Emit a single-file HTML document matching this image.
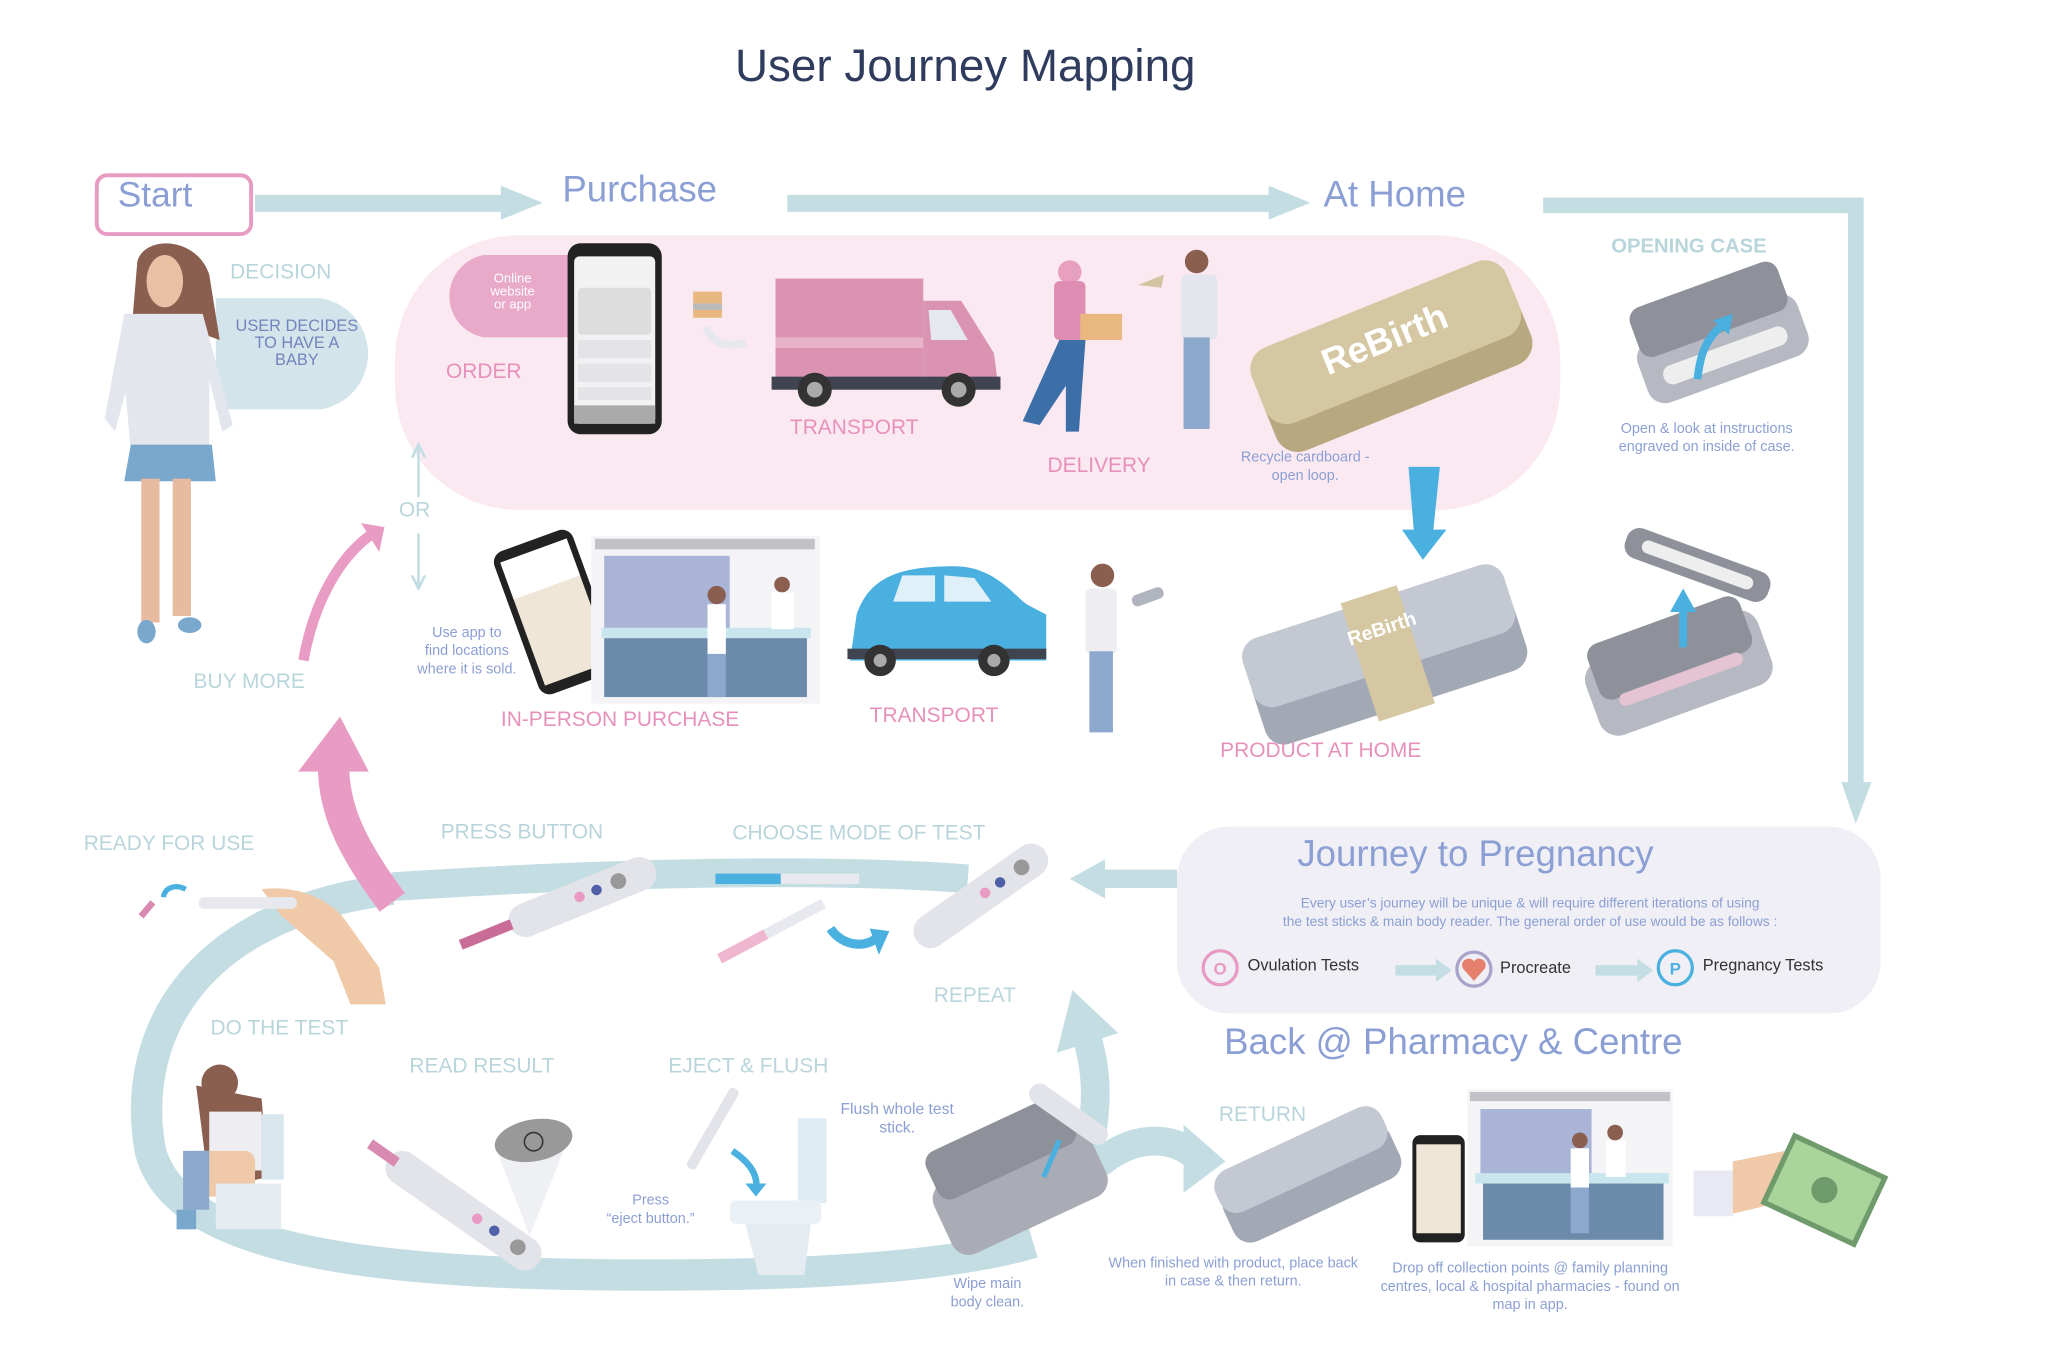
<!DOCTYPE html>
<html><head><meta charset="utf-8"><style>
html,body{margin:0;padding:0;background:#fff;width:2048px;height:1365px;overflow:hidden}
#s{position:absolute;left:0;top:0;width:1566px;height:1044px;transform:scale(1.3078);transform-origin:0 0;font-family:"Liberation Sans",sans-serif}
.t{position:absolute;white-space:nowrap;line-height:1}
.lb{color:#b9d5dc;font-size:16px}
.pk{color:#e690bb;font-size:16px}
.sm{color:#8b9fd4;font-size:11px;text-align:center;line-height:14px;white-space:nowrap;position:absolute}
.h{color:#8b9fd4;font-size:28px}
svg{position:absolute;left:0;top:0}
</style></head><body><div id="s">
<svg width="1566" height="1044" viewBox="0 0 1566 1044">
<rect x="302" y="180" width="891" height="210" rx="95" fill="#fbe9f1"/>
<rect x="900" y="632" width="538" height="143" rx="40" fill="#efeff5"/>
<g fill="#c3dde3">
<rect x="195" y="149" width="190" height="13"/><polygon points="383,142 415,155 383,168"/>
<rect x="602" y="149" width="370" height="13"/><polygon points="970,142 1002,155 970,168"/>
<rect x="1180" y="151" width="245" height="12"/><rect x="1413" y="151" width="12" height="450"/><polygon points="1408,598 1431,598 1419,630"/>
<polygon points="900,665 845,665 845,657 818,672 845,687 845,679 900,679"/>
<polygon points="1067,738 1098,738 1098,733 1110,742 1098,751 1098,746 1067,746"/>
<polygon points="1220,738 1252,738 1252,733 1264,742 1252,751 1252,746 1220,746"/>
</g>
<rect x="74" y="134" width="118" height="45" rx="8" fill="#fff" stroke="#e89cc4" stroke-width="3"/>
<path d="M300,678 C500,665 650,665 740,672" stroke="#c3dde3" stroke-width="22" fill="none"/>
<path d="M300,680 C140,700 100,800 115,880 C135,960 300,975 500,975 C650,975 740,965 790,950" stroke="#c3dde3" stroke-width="24" fill="none"/>
<path d="M830,890 C840,850 840,820 830,790" stroke="#c3dde3" stroke-width="22" fill="none"/>
<polygon points="808,805 820,757 855,790" fill="#c3dde3"/>
<path d="M840,890 C870,865 900,870 915,885" stroke="#c3dde3" stroke-width="22" fill="none"/>
<polygon points="905,860 937,888 905,912" fill="#c3dde3"/>
<path d="M232,505 C240,460 260,425 285,408" stroke="#e89cc4" stroke-width="8" fill="none"/>
<polygon points="276,400 294,403 290,422" fill="#e89cc4"/>
<path d="M300,690 C270,650 255,620 255,585" stroke="#e89cc4" stroke-width="24" fill="none"/>
<polygon points="228,590 260,548 282,590" fill="#e89cc4"/>
<g stroke="#c3dde3" stroke-width="2" fill="none"><line x1="320" y1="342" x2="320" y2="380"/><line x1="320" y1="408" x2="320" y2="448"/><polyline points="315,350 320,340 325,350"/><polyline points="315,440 320,450 325,440"/></g>
<path d="M165,228 H245 A43,43 0 0 1 245,313 H165 Z" fill="#d3e5eb"/>
<path d="M440,195 H370 A32,32 0 0 0 370,258 H440 Z" fill="#e9a9c9"/>
<path d="M105,200 C110,180 150,180 160,210 L168,260 L140,250 L100,260 Z" fill="#8a5f50"/>
<ellipse cx="126" cy="215" rx="14" ry="20" fill="#e8c0a3"/>
<path d="M95,240 L155,240 L178,325 L170,330 L160,290 L160,345 L100,345 L96,300 L88,330 L80,320 Z" fill="#e4e6ee"/>
<path d="M100,340 L162,340 L165,368 L95,368 Z" fill="#7aa8cc"/>
<rect x="108" y="366" width="14" height="110" fill="#e6bba0"/><rect x="132" y="366" width="14" height="105" fill="#e6bba0"/>
<ellipse cx="112" cy="483" rx="7" ry="9" fill="#7aa8cc"/><ellipse cx="145" cy="478" rx="9" ry="6" fill="#7aa8cc"/>
<rect x="434" y="186" width="72" height="146" rx="10" fill="#222"/>
<rect x="439" y="196" width="62" height="128" rx="4" fill="#f2f2f2"/>
<rect x="442" y="220" width="56" height="36" rx="3" fill="#ddd"/><rect x="442" y="260" width="56" height="14" fill="#e4e4e8"/><rect x="442" y="278" width="56" height="14" fill="#e4e4e8"/><rect x="442" y="296" width="56" height="10" fill="#e4e4e8"/>
<rect x="439" y="310" width="62" height="14" fill="#aaa"/>
<rect x="530" y="223" width="22" height="20" fill="#e8b880"/><rect x="530" y="232" width="22" height="5" fill="#bbb"/>
<path d="M540,250 C545,265 560,265 570,262" stroke="#e6e8ee" stroke-width="6" fill="none"/>
<rect x="593" y="213" width="113" height="80" fill="#db93b2"/>
<path d="M706,230 L735,230 L760,270 L763,293 L706,293 Z" fill="#db93b2"/>
<path d="M710,237 L727,237 L740,260 L712,260 Z" fill="#e6e8f0"/>
<rect x="593" y="258" width="113" height="8" fill="#e9b3ca"/>
<rect x="590" y="288" width="175" height="10" fill="#3f4450"/>
<circle cx="623" cy="298" r="13" fill="#333"/><circle cx="623" cy="298" r="6" fill="#aaa"/>
<circle cx="733" cy="298" r="13" fill="#333"/><circle cx="733" cy="298" r="6" fill="#aaa"/>
<circle cx="818" cy="208" r="9" fill="#e8a0bf"/><rect x="806" y="215" width="24" height="45" rx="4" fill="#e08db3"/>
<rect x="826" y="240" width="32" height="20" fill="#e8b880"/>
<path d="M810,260 L830,260 L825,330 L815,330 L815,295 L795,325 L782,322 Z" fill="#3c6ea8"/>
<path d="M870,218 L890,210 L888,220 Z" fill="#d3c3a0"/>
<circle cx="915" cy="200" r="9" fill="#8a5f50"/><rect x="903" y="210" width="28" height="50" rx="5" fill="#e4e6ee"/>
<rect x="905" y="258" width="20" height="70" fill="#8ca8cc"/>
<g transform="translate(1063,270) rotate(-22)"><rect x="-105" y="-25" width="210" height="70" rx="18" fill="#b8a880"/><rect x="-105" y="-40" width="210" height="62" rx="18" fill="#d6c7a3"/>
<text x="0" y="-2" text-anchor="middle" fill="#fff" font-size="28" font-weight="bold" font-family="Liberation Sans">ReBirth</text></g>
<g transform="translate(1315,260) rotate(-20)"><rect x="-65" y="-18" width="130" height="50" rx="14" fill="#b6b9c2"/><rect x="-60" y="-45" width="120" height="40" rx="10" fill="#8e919a"/><rect x="-50" y="5" width="100" height="15" rx="7" fill="#eee"/></g>
<path d="M1298,290 C1300,270 1305,258 1318,248" stroke="#4ab0e0" stroke-width="6" fill="none"/><polygon points="1310,245 1325,240 1322,256" fill="#4ab0e0"/>
<polygon points="1077,357 1101,357 1096,405 1106,405 1088,428 1072,405 1081,405" fill="#4ab0e0"/>
<g transform="translate(1058,498) rotate(-18)"><rect x="-105" y="-15" width="210" height="60" rx="15" fill="#a3a8b5"/><rect x="-105" y="-40" width="210" height="55" rx="15" fill="#c4c8d2"/><rect x="-20" y="-45" width="45" height="95" fill="#d6c7a3"/>
<text x="4" y="-12" text-anchor="middle" fill="#fff" font-size="15" font-weight="bold" font-family="Liberation Sans">ReBirth</text></g>
<g transform="translate(1298,432) rotate(20)"><rect x="-58" y="-12" width="116" height="24" rx="10" fill="#8e919a"/><rect x="-45" y="-5" width="90" height="10" rx="5" fill="#eee"/></g>
<g transform="translate(1282,510) rotate(-20)"><rect x="-70" y="-25" width="140" height="60" rx="15" fill="#b6b9c2"/><rect x="-62" y="-38" width="124" height="45" rx="10" fill="#8e919a"/><rect x="-50" y="5" width="100" height="10" rx="5" fill="#e4c3d3"/></g>
<rect x="1284" y="465" width="6" height="30" fill="#4ab0e0"/><polygon points="1277,468 1287,450 1297,468" fill="#4ab0e0"/>
<g transform="translate(425,468) rotate(-20)"><rect x="-32" y="-58" width="64" height="116" rx="9" fill="#222"/><rect x="-27" y="-50" width="54" height="100" fill="#efe6d8"/><rect x="-27" y="-50" width="54" height="30" fill="#fff"/></g>
<rect x="452" y="410" width="175" height="128" fill="#f4f4f6"/><rect x="455" y="412" width="168" height="8" fill="#c0c2c8"/>
<rect x="462" y="425" width="96" height="60" fill="#a9b4d6"/><rect x="462" y="485" width="155" height="48" fill="#6c8aaa"/><rect x="460" y="480" width="160" height="8" fill="#c9e6ef"/>
<circle cx="548" cy="455" r="7" fill="#8a5f50"/><rect x="541" y="462" width="14" height="40" fill="#fff"/><rect x="541" y="500" width="14" height="33" fill="#8ca8cc"/>
<circle cx="598" cy="447" r="6" fill="#8a5f50"/><rect x="590" y="453" width="17" height="28" fill="#fff"/>
<path d="M655,470 C665,440 690,433 730,433 C760,433 775,455 785,462 L800,470 L800,505 L650,505 Z" fill="#4ab0e0"/>
<path d="M683,460 L690,440 L715,440 L715,460 Z M722,460 L722,440 L745,442 L758,460 Z" fill="#dff0f8"/>
<rect x="648" y="496" width="152" height="8" fill="#3f4450"/>
<circle cx="673" cy="505" r="12" fill="#333"/><circle cx="673" cy="505" r="5" fill="#aaa"/><circle cx="760" cy="505" r="12" fill="#333"/><circle cx="760" cy="505" r="5" fill="#aaa"/>
<circle cx="843" cy="440" r="9" fill="#8a5f50"/><rect x="830" y="450" width="24" height="50" rx="4" fill="#eeeef2"/><rect x="833" y="498" width="18" height="62" fill="#8ca8cc"/>
<rect x="865" y="452" width="25" height="9" rx="4" fill="#b0b4be" transform="rotate(-20 877 456)"/>
<circle cx="933" cy="740" r="13" fill="none" stroke="#e99ac4" stroke-width="2.5"/><text x="933" y="745" text-anchor="middle" fill="#e99ac4" font-size="13" font-weight="bold" font-family="Liberation Sans">O</text>
<circle cx="1127" cy="741" r="13" fill="none" stroke="#a9a3cc" stroke-width="2.5"/><path d="M1127,750 L1119,741 A4.5,4.5 0 1 1 1127,735 A4.5,4.5 0 1 1 1135,741 Z" fill="#e5806c"/>
<circle cx="1281" cy="740" r="13" fill="none" stroke="#4ab0e0" stroke-width="2.5"/><text x="1281" y="745" text-anchor="middle" fill="#4ab0e0" font-size="13" font-weight="bold" font-family="Liberation Sans">P</text>
<path d="M200,680 C230,676 255,690 265,705 L290,740 L295,768 L268,768 L255,735 L215,700 Z" fill="#efc9a8"/>
<rect x="152" y="686" width="75" height="9" rx="4" fill="#e8e9ee"/>
<rect x="110" y="688" width="5" height="14" fill="#d98ab0" transform="rotate(40 112 695)"/>
<path d="M125,686 C126,678 135,676 142,680" stroke="#4ab0e0" stroke-width="4" fill="none"/>
<g transform="translate(445,685) rotate(-22)"><rect x="-60" y="-12" width="120" height="26" rx="13" fill="#e2e4ea"/><circle cx="30" cy="0" r="6" fill="#999"/><circle cx="12" cy="0" r="4" fill="#5060a8"/><circle cx="-2" cy="0" r="4" fill="#e99ac4"/><rect x="-100" y="-4" width="42" height="8" fill="#c96c97"/></g>
<rect x="547" y="668" width="110" height="8" fill="#e8e9ee"/><rect x="547" y="668" width="50" height="8" fill="#4ab0e0"/>
<g transform="translate(590,712) rotate(-28)"><rect x="-45" y="-4" width="90" height="8" fill="#e8e9ee"/><rect x="-45" y="-4" width="40" height="8" fill="#f0b5cf"/></g>
<path d="M635,710 C645,725 665,725 672,715" stroke="#4ab0e0" stroke-width="7" fill="none"/><polygon points="665,710 680,712 672,730" fill="#4ab0e0"/>
<g transform="translate(750,685) rotate(-35)"><rect x="-60" y="-13" width="120" height="26" rx="13" fill="#e2e4ea"/><circle cx="38" cy="0" r="6" fill="#999"/><circle cx="18" cy="0" r="4" fill="#5060a8"/><circle cx="4" cy="0" r="4" fill="#e99ac4"/></g>
<circle cx="168" cy="828" r="14" fill="#8a5f50"/><path d="M150,830 L200,840 L205,900 L160,910 Z" fill="#8a5f50"/>
<rect x="160" y="850" width="40" height="45" fill="#eeeef2"/><rect x="140" y="880" width="55" height="35" rx="8" fill="#efc9a8"/><rect x="140" y="880" width="20" height="45" fill="#8ca8cc"/>
<rect x="200" y="852" width="17" height="50" fill="#d8e6ee"/><rect x="165" y="905" width="50" height="35" fill="#e4ecf2"/><rect x="135" y="925" width="15" height="15" fill="#7aa8cc"/>
<g transform="translate(355,925) rotate(35)"><rect x="-70" y="-12" width="140" height="26" rx="13" fill="#e2e4ea"/><circle cx="50" cy="0" r="6" fill="#999"/><circle cx="28" cy="0" r="4" fill="#5060a8"/><circle cx="12" cy="0" r="4" fill="#e99ac4"/><rect x="-88" y="-4" width="25" height="8" fill="#d98ab0"/></g>
<polygon points="380,880 435,870 405,945" fill="#eef0f4"/>
<ellipse cx="408" cy="872" rx="30" ry="16" fill="#999" transform="rotate(-10 408 872)"/><circle cx="408" cy="873" r="7" fill="none" stroke="#333" stroke-width="1.2"/>
<g transform="translate(545,863) rotate(-60)"><rect x="-35" y="-4" width="70" height="8" rx="3" fill="#e2e4ea"/></g>
<path d="M560,880 C575,890 580,900 578,910" stroke="#4ab0e0" stroke-width="5" fill="none"/><polygon points="570,905 586,905 578,915" fill="#4ab0e0"/>
<rect x="610" y="855" width="22" height="65" fill="#e0ecf4"/><rect x="558" y="918" width="70" height="18" rx="5" fill="#eaf1f6"/><path d="M570,936 L620,936 L615,975 L580,975 Z" fill="#e4ecf2"/>
<g transform="translate(778,905) rotate(-25)"><rect x="-65" y="-25" width="130" height="60" rx="14" fill="#a9acb4"/><rect x="-58" y="-50" width="116" height="40" rx="10" fill="#8e919a"/></g>
<g transform="translate(817,852) rotate(35)"><rect x="-35" y="-8" width="70" height="16" rx="8" fill="#e2e4ea"/></g>
<path d="M810,872 L798,900" stroke="#4ab0e0" stroke-width="4"/>
<g transform="translate(1000,898) rotate(-25)"><rect x="-70" y="-15" width="140" height="45" rx="14" fill="#a3a8b5"/><rect x="-70" y="-30" width="140" height="35" rx="14" fill="#c4c8d2"/></g>
<rect x="1080" y="868" width="40" height="82" rx="6" fill="#222"/><rect x="1083" y="875" width="34" height="68" fill="#efe6d8"/>
<rect x="1122" y="833" width="157" height="120" fill="#f4f4f6"/><rect x="1124" y="835" width="153" height="7" fill="#c0c2c8"/>
<rect x="1132" y="848" width="85" height="55" fill="#a9b4d6"/><rect x="1134" y="903" width="138" height="45" fill="#6c8aaa"/><rect x="1128" y="897" width="148" height="8" fill="#c9e6ef"/>
<circle cx="1208" cy="872" r="6" fill="#8a5f50"/><rect x="1201" y="878" width="14" height="65" fill="#8ca8cc"/><rect x="1201" y="878" width="14" height="30" fill="#fff"/>
<circle cx="1235" cy="866" r="6" fill="#8a5f50"/><rect x="1228" y="872" width="15" height="28" fill="#fff"/>
<rect x="1295" y="895" width="30" height="35" fill="#e8e9f2"/><path d="M1325,888 L1365,880 L1380,915 L1325,928 Z" fill="#efc9a8"/>
<g transform="translate(1395,910) rotate(25)"><rect x="-40" y="-30" width="80" height="60" fill="#6f9a6c"/><rect x="-36" y="-26" width="72" height="52" fill="#a9d49a"/><circle cx="0" cy="0" r="10" fill="#6f9a6c"/></g>
</svg>

<div class="t" style="left:562px;top:33px;font-size:35px;color:#2f3c5e">User Journey Mapping</div>
<div class="t h" style="left:90px;top:136px;font-size:27px">Start</div>
<div class="t h" style="left:430px;top:131px">Purchase</div>
<div class="t h" style="left:1012px;top:135px">At Home</div>
<div class="t lb" style="left:176px;top:201px">DECISION</div>
<div class="sm" style="left:170px;top:243px;width:114px;font-size:12.5px;line-height:13px;color:#7284bd">USER DECIDES<br>TO HAVE A<br>BABY</div>
<div class="sm" style="left:362px;top:209px;width:60px;font-size:10px;line-height:10px;color:#fff">Online<br>website<br>or app</div>
<div class="t pk" style="left:341px;top:277px">ORDER</div>
<div class="t pk" style="left:604px;top:320px">TRANSPORT</div>
<div class="t pk" style="left:801px;top:349px">DELIVERY</div>
<div class="sm" style="left:938px;top:343px;width:120px">Recycle cardboard -<br>open loop.</div>
<div class="t lb" style="left:1232px;top:181px;font-weight:bold;font-size:15.5px">OPENING CASE</div>
<div class="sm" style="left:1225px;top:321px;width:160px">Open &amp; look at instructions<br>engraved on inside of case.</div>
<div class="t lb" style="left:305px;top:383px">OR</div>
<div class="sm" style="left:315px;top:477px;width:84px">Use app to<br>find locations<br>where it is sold.</div>
<div class="t lb" style="left:148px;top:514px">BUY MORE</div>
<div class="t pk" style="left:383px;top:543px">IN-PERSON PURCHASE</div>
<div class="t pk" style="left:665px;top:540px">TRANSPORT</div>
<div class="t pk" style="left:933px;top:567px">PRODUCT AT HOME</div>
<div class="t h" style="left:992px;top:639px">Journey to Pregnancy</div>
<div class="sm" style="left:950px;top:684px;width:440px;font-size:10.5px;line-height:14px">Every user’s journey will be unique &amp; will require different iterations of using<br>the test sticks &amp; main body reader. The general order of use would be as follows :</div>
<div class="t" style="left:954px;top:732px;font-size:12.5px;color:#333">Ovulation Tests</div>
<div class="t" style="left:1147px;top:734px;font-size:12.5px;color:#333">Procreate</div>
<div class="t" style="left:1302px;top:732px;font-size:12.5px;color:#333">Pregnancy Tests</div>
<div class="t h" style="left:936px;top:783px">Back @ Pharmacy &amp; Centre</div>
<div class="t lb" style="left:64px;top:638px">READY FOR USE</div>
<div class="t lb" style="left:337px;top:629px">PRESS BUTTON</div>
<div class="t lb" style="left:560px;top:630px">CHOOSE MODE OF TEST</div>
<div class="t lb" style="left:714px;top:754px">REPEAT</div>
<div class="t lb" style="left:161px;top:779px">DO THE TEST</div>
<div class="t lb" style="left:313px;top:808px">READ RESULT</div>
<div class="t lb" style="left:511px;top:808px">EJECT &amp; FLUSH</div>
<div class="t lb" style="left:932px;top:845px">RETURN</div>
<div class="sm" style="left:630px;top:841px;width:112px;font-size:12px">Flush whole test<br>stick.</div>
<div class="sm" style="left:450px;top:911px;width:95px">Press<br>“eject button.”</div>
<div class="sm" style="left:715px;top:975px;width:80px">Wipe main<br>body clean.</div>
<div class="sm" style="left:838px;top:959px;width:210px">When finished with product, place back<br>in case &amp; then return.</div>
<div class="sm" style="left:1045px;top:963px;width:250px">Drop off collection points @ family planning<br>centres, local &amp; hospital pharmacies - found on<br>map in app.</div>
</div></body></html>
